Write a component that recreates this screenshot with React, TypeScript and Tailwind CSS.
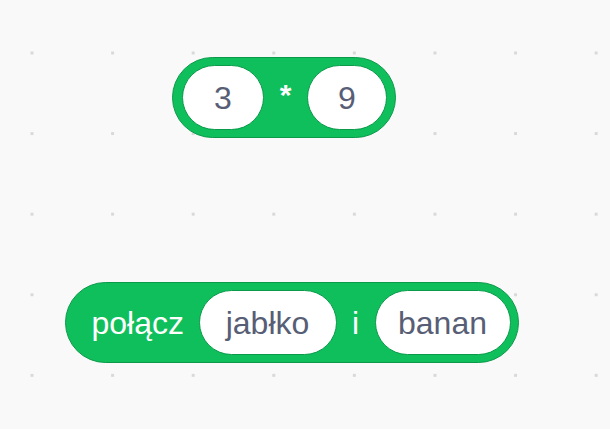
import React from "react";

const font = { fontFamily: '"Liberation Sans", Arial, Helvetica, sans-serif' };

function Oval({ w, children }: { w: string; children: React.ReactNode }) {
  return (
    <div
      className={`${w} h-[65px] shrink-0 rounded-full bg-white border border-[#0a9a4a] flex items-center justify-center text-[32px] text-[#575e75]`}
    >
      {children}
    </div>
  );
}

export default function App() {
  return (
    <div
      style={font}
      className="relative w-[610px] h-[429px] overflow-hidden bg-[#f9f9f9] bg-[radial-gradient(circle_at_center,#d9d9d9_0px,#d9d9d9_1.4px,transparent_1.9px)] bg-[length:80.6px_80.6px] bg-[position:-8.3px_12.7px]"
    >
      <div className="absolute left-[172px] top-[57px] h-[81px] w-[224px] rounded-full bg-[#0fbf5c] border-[1.5px] border-[#0b9a4a] flex items-center pl-[9px] pr-[7.5px]">
        <Oval w="w-[82px]">3</Oval>
        <div className="w-[43px] shrink-0 flex justify-center text-white text-[30px] font-bold leading-none -mt-[6px]">*</div>
        <Oval w="w-[80px]">9</Oval>
      </div>

      <div className="absolute left-[65px] top-[282px] h-[81px] w-[454px] rounded-full bg-[#0fbf5c] border-[1.5px] border-[#0b9a4a] flex items-center pl-[25.5px] pr-[7.5px]">
        <span className="text-white text-[32px] whitespace-nowrap w-[107px] shrink-0">połącz</span>
        <Oval w="w-[138px]">jabłko</Oval>
        <span className="text-white text-[32px] w-[38px] shrink-0 text-center">i</span>
        <Oval w="w-[136px]">banan</Oval>
      </div>
    </div>
  );
}
